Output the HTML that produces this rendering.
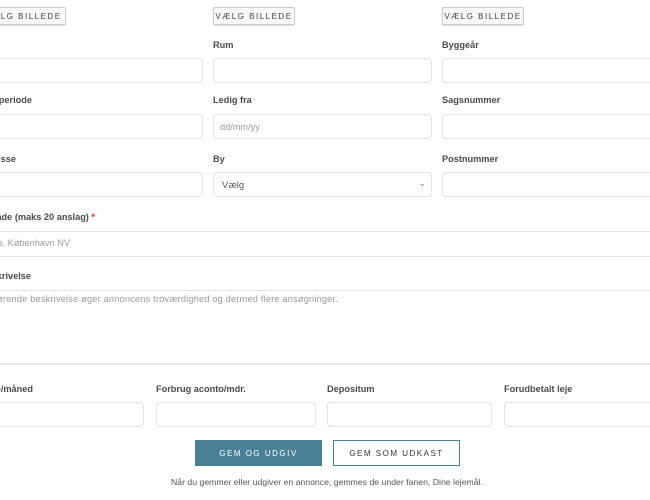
<!DOCTYPE html>
<html><head><meta charset="utf-8"><style>
*{box-sizing:border-box;margin:0;padding:0}
body{width:650px;height:500px;overflow:hidden;background:#fff;font-family:"Liberation Sans",sans-serif;position:relative;color:#444}
.a{position:absolute;white-space:nowrap}
.lbl{font-size:9.2px;font-weight:bold;color:#4a4a4a}
.in{position:absolute;border:1px solid #e2e2e2;border-radius:4px;background:#fff}
.btn{position:absolute;height:18px;border:1px solid #ccc;border-radius:2px;background:#f7f7f7;font-size:8px;letter-spacing:1.5px;color:#444;display:flex;align-items:center;justify-content:center;box-shadow:0 1px 1px #ddd;white-space:nowrap;overflow:hidden}
.ph{font-size:9.2px;color:#999}
.wrap{position:absolute;left:0;top:0;width:650px;height:500px;overflow:hidden}
</style></head><body><div class="wrap">
<div class="btn" style="left:-20px;width:86px;top:7px">VÆLG BILLEDE</div>
<div class="btn" style="left:213px;width:82px;top:7px">VÆLG BILLEDE</div>
<div class="btn" style="left:442px;width:82px;top:7px">VÆLG BILLEDE</div>

<div class="a lbl" style="left:213px;top:40px">Rum</div>
<div class="a lbl" style="left:442px;top:40px">Byggeår</div>
<div class="in" style="left:-10px;width:213px;top:58px;height:25px"></div>
<div class="in" style="left:213px;width:219px;top:58px;height:25px"></div>
<div class="in" style="left:442px;width:220px;top:58px;height:25px"></div>

<div class="a lbl" style="right:618px;top:95px">Lejeperiode</div>
<div class="a lbl" style="left:213px;top:95px">Ledig fra</div>
<div class="a lbl" style="left:442px;top:95px">Sagsnummer</div>
<div class="in" style="left:-10px;width:213px;top:114px;height:25px"></div>
<div class="in" style="left:213px;width:219px;top:114px;height:25px"><span class="a ph" style="left:6px;top:7px">dd/mm/yy</span></div>
<div class="in" style="left:442px;width:220px;top:114px;height:25px"></div>

<div class="a lbl" style="right:634px;top:154px">Adresse</div>
<div class="a lbl" style="left:213px;top:154px">By</div>
<div class="a lbl" style="left:442px;top:154px">Postnummer</div>
<div class="in" style="left:-10px;width:213px;top:172px;height:25px"></div>
<div class="in" style="left:213px;width:219px;top:172px;height:25px"><span class="a" style="left:8px;top:7px;font-size:9.5px;color:#555">Vælg</span><span class="a" style="right:5px;top:5px;font-size:9px;color:#888">⌄</span></div>
<div class="in" style="left:442px;width:220px;top:172px;height:25px"></div>

<div class="a lbl" style="right:555px;top:212px">Område (maks 20 anslag) <span style="color:#e22">*</span></div>
<div style="position:absolute;left:-5px;width:660px;top:231px;height:26px;border-top:1px solid #e2e2e2;border-bottom:1px solid #e2e2e2"></div>
<div class="a ph" style="right:580px;top:238px">Eks. København NV</div>

<div class="a lbl" style="right:619px;top:271px">Beskrivelse</div>
<div style="position:absolute;left:-5px;width:660px;top:290px;height:75px;border-top:1px solid #e2e2e2;border-bottom:2px solid #e8e8e8"></div>
<div class="a ph" style="right:312px;top:294px;letter-spacing:0.2px">En fyldestgørende beskrivelse øger annoncens troværdighed og dermed flere ansøgninger.</div>

<div class="a lbl" style="right:617px;top:384px">Husleje/måned</div>
<div class="a lbl" style="left:156px;top:384px">Forbrug aconto/mdr.</div>
<div class="a lbl" style="left:327px;top:384px">Depositum</div>
<div class="a lbl" style="left:504px;top:384px">Forudbetalt leje</div>
<div class="in" style="left:-10px;width:154px;top:402px;height:25px"></div>
<div class="in" style="left:156px;width:160px;top:402px;height:25px"></div>
<div class="in" style="left:327px;width:165px;top:402px;height:25px"></div>
<div class="in" style="left:504px;width:160px;top:402px;height:25px"></div>

<div class="a" style="left:195px;top:440px;width:127px;height:26px;background:#4a8096;color:#fff;font-size:8px;letter-spacing:1.5px;display:flex;align-items:center;justify-content:center">GEM OG UDGIV</div>
<div class="a" style="left:333px;top:440px;width:127px;height:26px;border:1px solid #4a8096;color:#333;font-size:8px;letter-spacing:1.5px;display:flex;align-items:center;justify-content:center">GEM SOM UDKAST</div>
<div class="a" style="left:0;width:654px;text-align:center;top:477px;font-size:8.7px;color:#555">Når du gemmer eller udgiver en annonce, gemmes de under fanen, Dine lejemål.</div>
</div></body></html>
